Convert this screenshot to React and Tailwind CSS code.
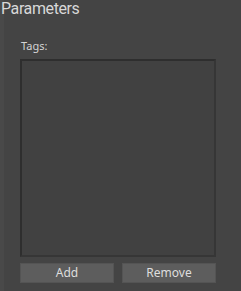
export default function App() {
  return (
    <div
      className="relative w-[241px] h-[291px] bg-[#444444] overflow-hidden text-[#d4d4d4]"
      style={{ fontFamily: '"Noto Sans", "Open Sans", sans-serif' }}
    >
      <div className="absolute left-0 top-0 h-full w-[4px] bg-[#494949]" />
      <div
        className="relative pl-[1px] text-[16px] leading-[18px] tracking-[-0.4px] text-[#d8d8d8]"
        style={{ fontFamily: 'Roboto, sans-serif' }}
      >
        Parameters
      </div>
      <div className="relative pl-[20px] pr-[25px] pt-[20px] flex flex-col">
        <div className="text-[11px] leading-[14px] h-[21px] pt-[1px] pl-[1px]">Tags:</div>
        <div className="h-[198px] bg-[#414141] border-2 border-t-[#2e2e2e] border-l-[#2e2e2e] border-r-[#363636] border-b-[#363636]" />
        <div className="flex gap-[8px] mt-[6px]">
          <button className="w-[94px] h-[20px] bg-[#5d5d5d] border border-[#545454] text-[12px] leading-[18px] text-[#dedede]">Add</button>
          <button className="w-[94px] h-[20px] bg-[#5d5d5d] border border-[#545454] text-[12px] leading-[18px] text-[#dedede]">Remove</button>
        </div>
      </div>
    </div>
  );
}
